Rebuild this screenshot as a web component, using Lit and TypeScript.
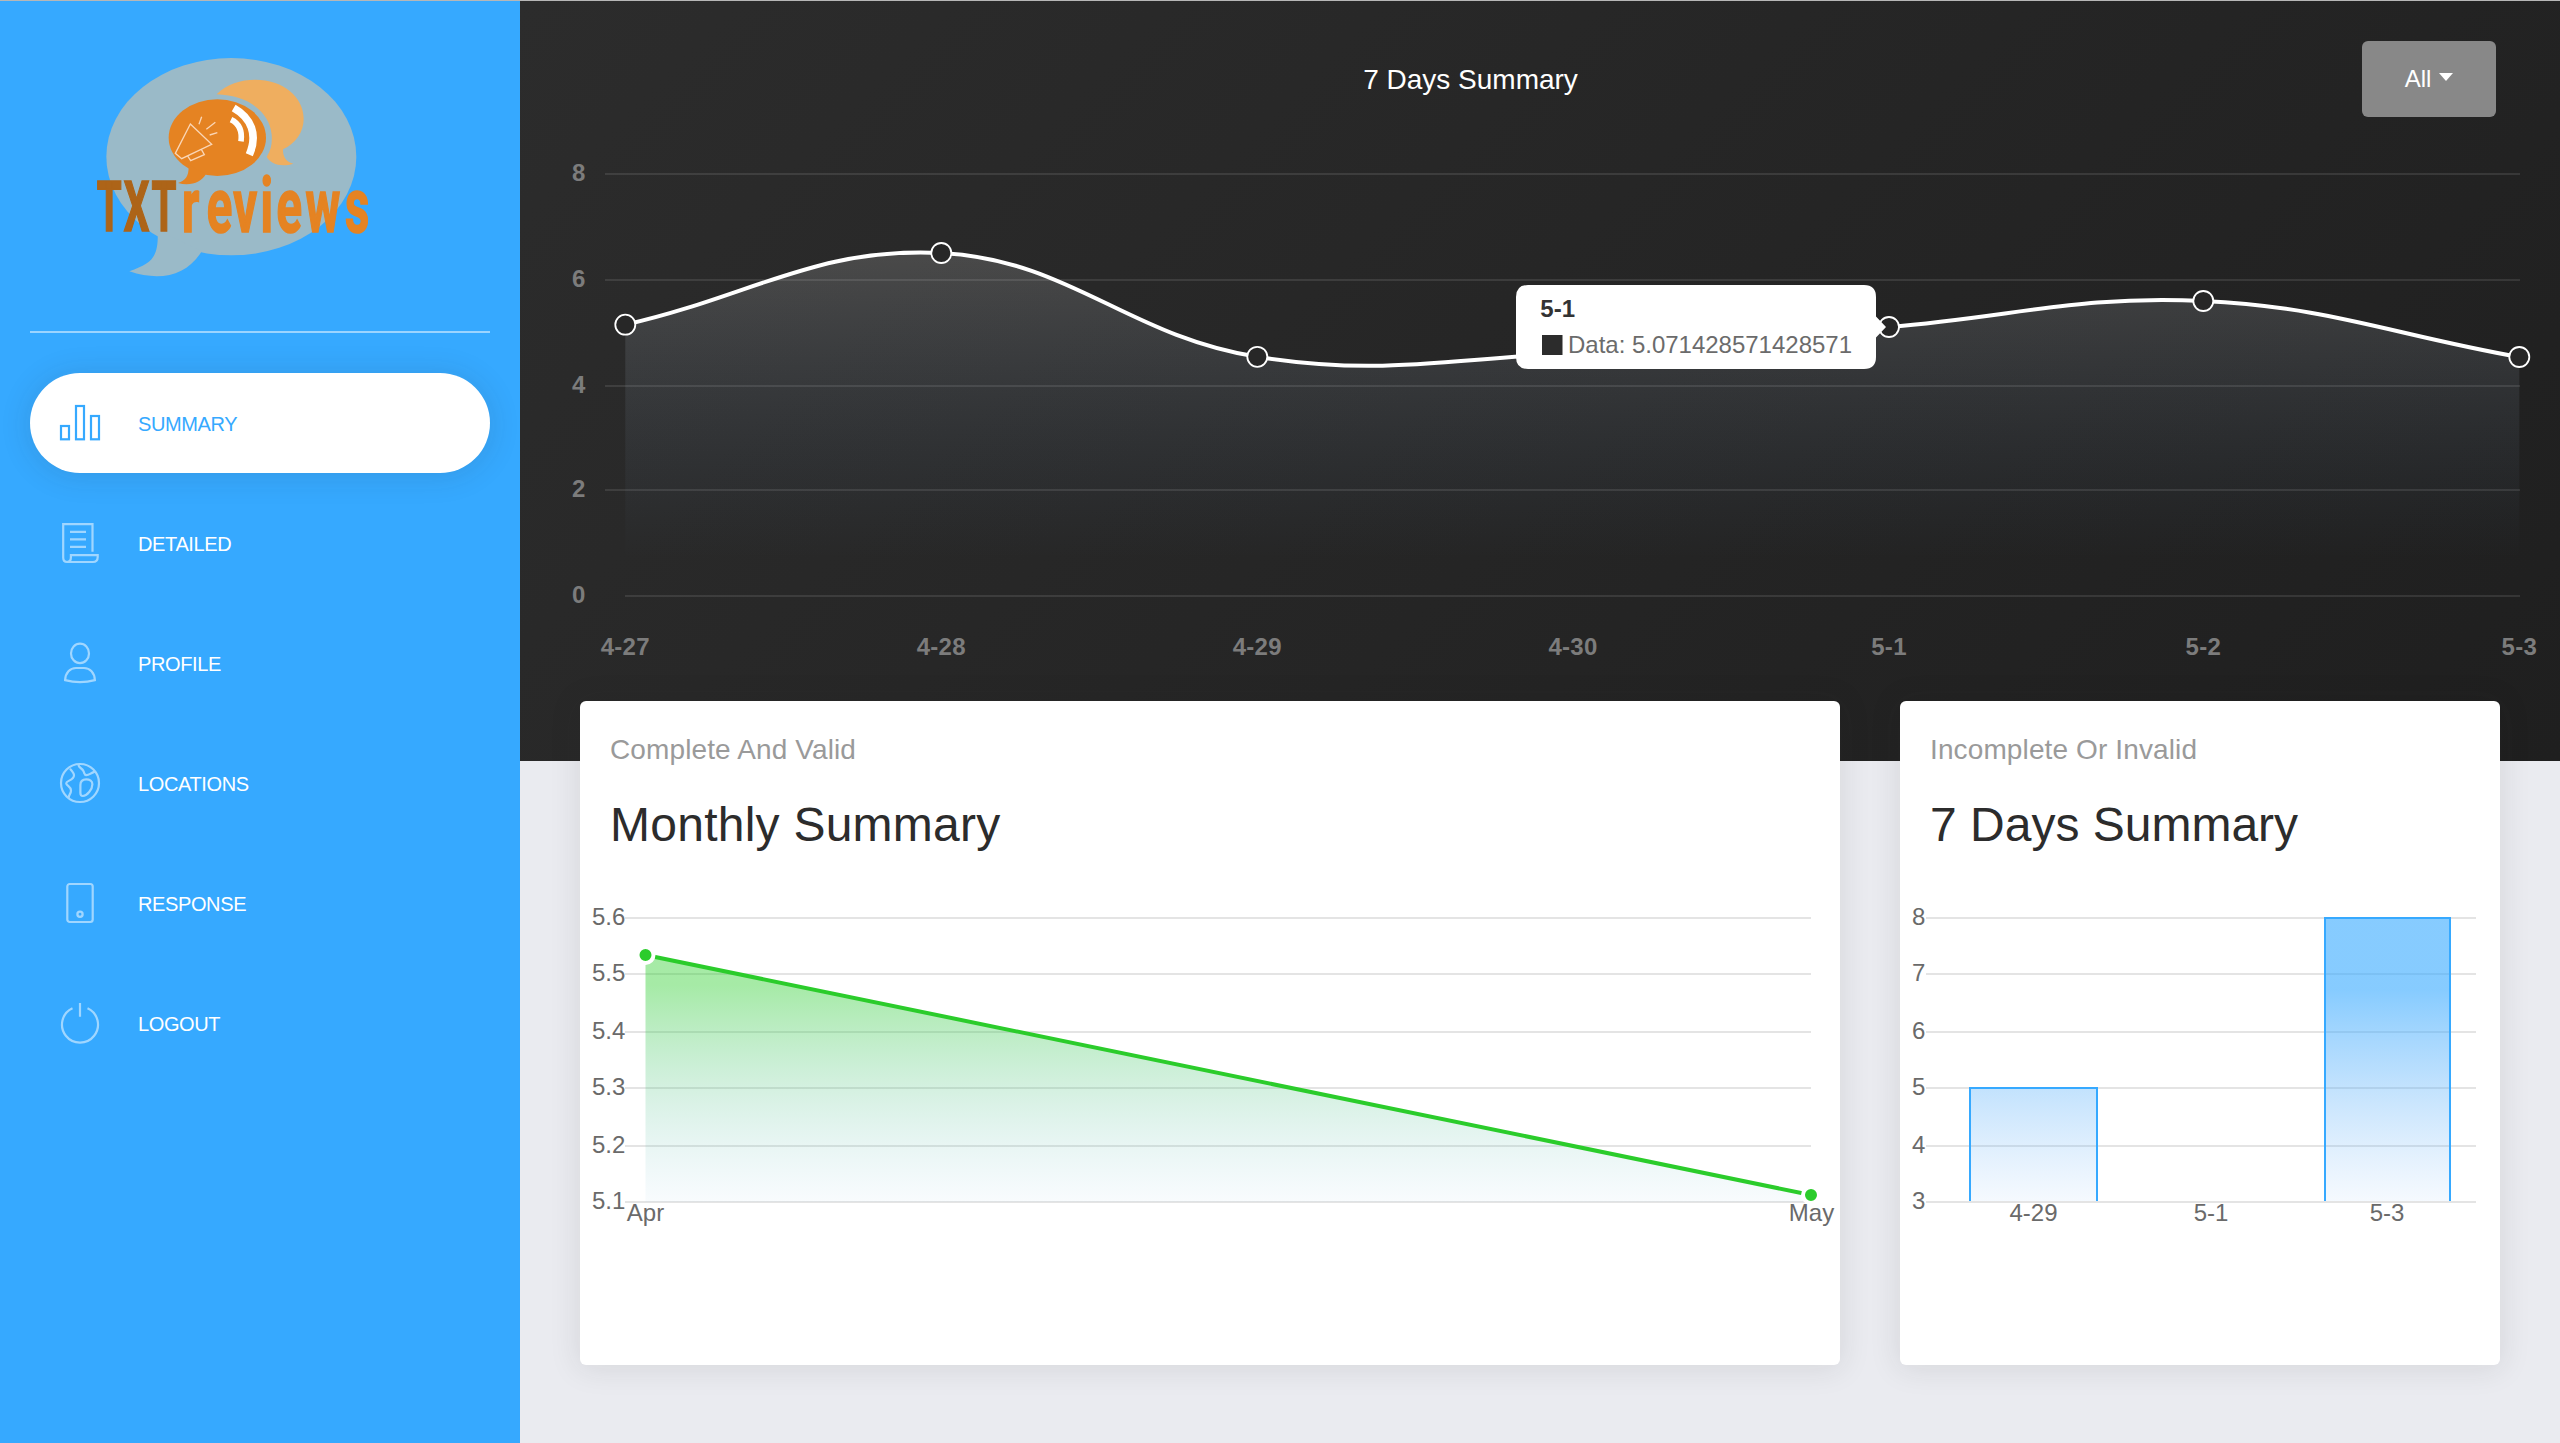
import { LitElement, html, svg, css, type TemplateResult } from "lit";
import { customElement, property } from "lit/decorators.js";
import { classMap } from "lit/directives/class-map.js";

type Point = { x: number; y: number };

/* Smooth path through the points, with control points taken from the neighbours. */
function splinePath(pts: Point[], tension = 0.4): string {
  const ctrl = pts.map((p, i) => {
    const a = pts[i - 1] ?? p;
    const b = pts[i + 1] ?? p;
    const d01 = Math.hypot(p.x - a.x, p.y - a.y);
    const d12 = Math.hypot(b.x - p.x, b.y - p.y);
    const fa = (tension * d01) / (d01 + d12);
    const fb = (tension * d12) / (d01 + d12);
    return {
      px: p.x - fa * (b.x - a.x),
      py: p.y - fa * (b.y - a.y),
      nx: p.x + fb * (b.x - a.x),
      ny: p.y + fb * (b.y - a.y),
    };
  });
  let d = `M${pts[0].x} ${pts[0].y}`;
  for (let i = 1; i < pts.length; i++) {
    d += `C${ctrl[i - 1].nx} ${ctrl[i - 1].ny} ${ctrl[i].px} ${ctrl[i].py} ${pts[i].x} ${pts[i].y}`;
  }
  return d;
}

const ICONS: Record<string, TemplateResult> = {
  bars: svg`<rect x="1" y="23" width="8" height="13.3"/><rect x="16" y="3" width="8" height="33.3"/><rect x="31" y="13" width="8" height="23.3"/>`,
  paper: svg`<path d="M32.5 28.7V1.1H3.2V34.6C3.2 37.4 4.6 39 7 39S10.9 37.4 10.9 34.6V32.2H37.7V34C37.7 37 35.8 39 32.8 39H7"/><path d="M10 8.8H26M10 16.3H26M10 23.8H26"/>`,
  user: svg`<ellipse cx="20" cy="10.4" rx="9" ry="9.7"/><path d="M5.1 37.1C5.5 29.6 10 25 16 25H24C30 25 34.5 29.6 34.9 37.1C26 39.5 14 39.5 5.1 37.1Z"/>`,
  globe: svg`<circle cx="20" cy="20" r="19"/><path d="M10 5.7C12.4 8.2 14 9.8 14 12.2C14 17.6 6.2 17.4 6.2 20.2C6.2 22.6 11 23.6 11 27.4C11 31 8.8 31.2 8.6 35"/><path d="M18.4 1.6C18.4 5 22 4.6 23.6 8.4C24.8 11.4 24.6 12.2 26.4 12.2C29.4 12.2 29.8 10.4 34.8 8.6"/><path d="M20.4 22C20.4 18 22.6 16.4 26.2 16.4C29.8 16.4 32.4 18.2 32.4 21.2C32.4 26.4 27 33 22.8 33C21 33 20.4 31.8 20.4 30Z"/>`,
  phone: svg`<rect x="7.3" y="1" width="25.4" height="38" rx="2.5"/><circle cx="20" cy="31.3" r="2.6" stroke-width="2.3"/>`,
  power: svg`<path d="M12.5 5.2A18 18 0 1 0 27.5 5.2M20 0V13.8"/>`,
};

@customElement("side-logo")
class SideLogo extends LitElement {
  static styles = css`
    :host { display: block; }
    svg { display: block; }
    .word { font-family: Roboto, "Liberation Sans", Arial, sans-serif; font-weight: 700; }
  `;
  render() {
    return html`<svg width="340" height="270" viewBox="0 0 1020 810">
      <g fill="#9abac8">
        <ellipse cx="514" cy="380" rx="375" ry="296" />
        <path d="M293 600C296 680 280 698 208 724C300 755 380 738 425 664Z" />
      </g>
      <path fill="#efae5f" d="M470 193C500 162 542 149 586 149C668 149 731 200 731 266C731 308 706 340 669 358C668 382 680 396 700 401C662 412 632 402 620 380C633 360 637 340 635 314C629 248 568 196 470 193Z" />
      <g fill="#e58322">
        <ellipse cx="472" cy="323" rx="146" ry="115" />
        <path d="M386 405C387 440 376 452 354 459C392 470 424 456 438 432Z" />
      </g>
      <g fill="none" stroke="#fff">
        <path stroke-width="23" d="M521 234C574 264 594 314 568 374" />
        <path stroke-width="17" d="M513 269C538 281 547 304 543 334" />
      </g>
      <path fill="none" stroke="#fad6b6" stroke-width="4" d="M391 282L455 343L365 386L346 370ZM383 378L392 392L433 374L424 358M417 283L425 260M439 298L466 277M449 315L472 308" />
      <text class="word" transform="translate(0 604) scale(.57 1)" x="193 336 481" y="0" font-size="212" fill="#ad6418" stroke="#ad6418" stroke-width="5">TXT</text>
      <text class="word" transform="translate(0 606) scale(.62 1)" x="590 710 838 970 1048 1188 1379" y="0" font-size="229" fill="#e58322" stroke="#e58322" stroke-width="5">reviews</text>
    </svg>`;
  }
}

@customElement("nav-item")
class NavItem extends LitElement {
  @property() icon = "";
  @property() label = "";
  @property({ type: Boolean }) active = false;

  static styles = css`
    :host { display: block; }
    .item {
      display: flex; align-items: center; height: 100px; box-sizing: border-box;
      padding-left: 30px; gap: 38px; border-radius: 50px; color: #fff;
      font-size: 20px; letter-spacing: -0.38px; line-height: 28px;
    }
    .item.active {
      background: #fff; color: #36a9ff;
      box-shadow: 0 2px 30px 2px rgba(39, 39, 39, 0.12);
    }
    svg { width: 40px; height: 40px; fill: none; stroke: currentColor; stroke-width: 2.2; opacity: 0.53; overflow: visible; }
    .active svg { opacity: 1; }
    .label { padding-top: 2px; }
  `;
  render() {
    return html`<div class=${classMap({ item: true, active: this.active })}>
      <svg viewBox="0 0 40 40">${ICONS[this.icon]}</svg>
      <span class="label">${this.label}</span>
    </div>`;
  }
}

@customElement("summary-chart")
class SummaryChart extends LitElement {
  private points: Point[] = [
    { x: 625.3, y: 324.7 }, { x: 941.3, y: 253 }, { x: 1257.3, y: 356.8 }, { x: 1573, y: 353 },
    { x: 1889, y: 327 }, { x: 2203.3, y: 301 }, { x: 2519.3, y: 357 },
  ];
  private days = ["4-27", "4-28", "4-29", "4-30", "5-1", "5-2", "5-3"];
  private ticks = [
    { v: 8, y: 174 }, { v: 6, y: 280 }, { v: 4, y: 386 }, { v: 2, y: 490 }, { v: 0, y: 596 },
  ];
  static styles = css`
    :host { display: block; }
    svg { display: block; font-family: "Liberation Sans", Arial, sans-serif; font-size: 24px; }
    .axis { fill: #7c7c7c; font-weight: 700; }
    .day { letter-spacing: 0.3px; }
    .tip-title { fill: #333; font-weight: 700; }
    .tip-text { fill: #6b6b6b; }
  `;
  render() {
    const d = splinePath(this.points);
    return html`<svg width="2040" height="635" viewBox="520 126 2040 635">
      <defs>
        <linearGradient id="fade" gradientUnits="userSpaceOnUse" x1="0" y1="560" x2="0" y2="258">
          <stop offset="0" stop-color="rgb(128,182,244)" stop-opacity="0" />
          <stop offset="1" stop-color="#fff" stop-opacity=".15" />
        </linearGradient>
      </defs>
      ${this.ticks.map((t) => svg`
        <rect x=${t.v ? 605 : 625} y=${t.y - 1} width=${t.v ? 1915 : 1895} height="2" fill="#fff" fill-opacity=".1"/>
        <text class="axis" x="585.4" y=${t.y + 7} text-anchor="end">${t.v}</text>`)}
      ${this.days.map((l, i) => svg`<text class="axis day" x=${this.points[i].x} y="655" text-anchor="middle">${l}</text>`)}
      <path d=${`${d}V596H625.3Z`} fill="url(#fade)" />
      <path d=${d} fill="none" stroke="#fff" stroke-width="4" />
      ${this.points.map((p) => svg`<circle cx=${p.x} cy=${p.y} r="10" fill="#272727" stroke="#fff" stroke-width="1.8"/>`)}
      <path fill="#fff" d="M1528 285H1864Q1876 285 1876 297V316.500L1886 327L1876 337.500V357Q1876 369 1864 369H1528Q1516 369 1516 357V297Q1516 285 1528 285Z" />
      <text class="tip-title" x="1540.300" y="317">5-1</text>
      <rect x="1542" y="335" width="20.500" height="20" fill="#2c2c2c" />
      <text class="tip-text" x="1568" y="353" textLength="284">Data: 5.071428571428571</text>
    </svg>`;
  }
}

const LIGHT_LINES = [918, 974, 1032, 1088, 1146, 1202];
const lightChartStyles = css`
  :host { display: block; }
  svg { display: block; font-family: "Liberation Sans", Arial, sans-serif; font-size: 24px; }
  .axis { fill: #6a6a6a; }
`;

@customElement("monthly-chart")
class MonthlyChart extends LitElement {
  private ticks = ["5.6", "5.5", "5.4", "5.3", "5.2", "5.1"];
  static styles = lightChartStyles;
  render() {
    return html`<svg width="1260" height="476" viewBox="580 889 1260 476">
      <defs>
        <linearGradient id="fade" gradientUnits="userSpaceOnUse" x1="0" y1="1230" x2="0" y2="985">
          <stop offset="0" stop-color="rgb(128,182,244)" stop-opacity="0" />
          <stop offset="1" stop-color="#2bce2b" stop-opacity=".42" />
        </linearGradient>
      </defs>
      ${this.ticks.map((t, i) => svg`
        <rect x="625" y=${LIGHT_LINES[i] - 1} width="1186" height="2" fill="#e4e4e4"/>
        <text class="axis" x="625.3" y=${LIGHT_LINES[i] + 7} text-anchor="end">${t}</text>`)}
      <path d="M645.500 955L1811 1195V1202H645.500Z" fill="url(#fade)" />
      <path d="M645.500 955L1811 1195" stroke="#2bcc2b" stroke-width="4" />
      <g fill="#2bcc2b" stroke="#fff" stroke-width="4">
        <circle cx="645.500" cy="955" r="8" /><circle cx="1811" cy="1195" r="8" />
      </g>
      <text class="axis" x="645.500" y="1221" text-anchor="middle">Apr</text>
      <text class="axis" x="1811.500" y="1221" text-anchor="middle">May</text>
    </svg>`;
  }
}

@customElement("invalid-chart")
class InvalidChart extends LitElement {
  private ticks = [8, 7, 6, 5, 4, 3];
  private bars = [
    { x: 1969.5, y: 1088, w: 128 },
    { x: 2324.5, y: 918, w: 126 },
  ];
  private days = [
    { l: "4-29", x: 2033.5 }, { l: "5-1", x: 2211 }, { l: "5-3", x: 2387 },
  ];
  static styles = lightChartStyles;
  render() {
    return html`<svg width="600" height="476" viewBox="1900 889 600 476">
      <defs>
        <linearGradient id="fade" gradientUnits="userSpaceOnUse" x1="0" y1="1230" x2="0" y2="990">
          <stop offset="0" stop-color="rgb(128,182,244)" stop-opacity="0" />
          <stop offset="1" stop-color="#36a9ff" stop-opacity=".6" />
        </linearGradient>
      </defs>
      ${this.ticks.map((t, i) => svg`
        <rect x="1926" y=${LIGHT_LINES[i] - 1} width="550" height="2" fill="#e4e4e4"/>
        <text class="axis" x="1925.3" y=${LIGHT_LINES[i] + 7} text-anchor="end">${t}</text>`)}
      ${this.bars.map((b) => svg`
        <rect x=${b.x} y=${b.y} width=${b.w} height=${1201 - b.y} fill="url(#fade)"/>
        <path d="M${b.x + 0.5} 1201V${b.y}H${b.x + b.w - 0.5}V1201" fill="none" stroke="#36a9ff" stroke-width="2"/>`)}
      ${this.days.map((t) => svg`<text class="axis" x=${t.x} y="1221" text-anchor="middle">${t.l}</text>`)}
    </svg>`;
  }
}

@customElement("app-root")
class AppRoot extends LitElement {
  private items = [
    ["bars", "SUMMARY"], ["paper", "DETAILED"], ["user", "PROFILE"],
    ["globe", "LOCATIONS"], ["phone", "RESPONSE"], ["power", "LOGOUT"],
  ];
  static styles = css`
    :host {
      display: flex; box-sizing: border-box; width: 2560px; height: 1443px; overflow: hidden;
      border-top: 1px solid #b7b7b7; background: #eaebf0;
      font-family: "Liberation Sans", Arial, sans-serif;
    }
    .side { width: 520px; flex: none; box-sizing: border-box; background: #36a9ff; padding: 29px 30px 0; }
    .brand { padding: 0 0 31px 30px; border-bottom: 2px solid rgba(255, 255, 255, 0.5); }
    .nav { display: flex; flex-direction: column; gap: 20px; padding-top: 40px; }
    .main { flex: 1; min-width: 0; display: flex; flex-direction: column; }
    .hero { height: 760px; flex: none; background: linear-gradient(135deg, #2c2c2c, #1f1f1f); }
    .bar {
      height: 125px; box-sizing: border-box; padding: 40px 64px 0 0;
      display: grid; grid-template-columns: 1fr 134px; align-items: start;
    }
    .title { color: #fff; font-size: 28px; line-height: 78px; text-align: center; padding-left: 59px; }
    .drop {
      height: 76px; border-radius: 6px; background: #888; color: #fff; font-size: 24px;
      display: flex; align-items: center; justify-content: center; gap: 8px;
    }
    .caret { border: 7px solid transparent; border-top: 8px solid #fff; border-bottom: 0; margin-bottom: 4px; }
    .cards { display: flex; gap: 60px; margin-top: -60px; padding-left: 60px; }
    .card {
      height: 664px; box-sizing: border-box; background: #fff; border-radius: 6px;
      box-shadow: 0 2px 30px 2px rgba(39, 39, 39, 0.1);
    }
    .wide { width: 1260px; }
    .slim { width: 600px; }
    .head { height: 188px; box-sizing: border-box; padding: 31px 30px 0; }
    .category { font-size: 28px; line-height: 36px; color: #9a9a9a; letter-spacing: 0.12px; }
    .heading { margin: 29px 0 0; font-weight: 400; font-size: 48px; line-height: 56px; color: #2c2c2c; }
    .wide .heading { letter-spacing: 0.25px; }
  `;
  render() {
    return html`
      <aside class="side">
        <div class="brand"><side-logo></side-logo></div>
        <nav class="nav">
          ${this.items.map(([icon, label], i) => html`<nav-item .icon=${icon} .label=${label} ?active=${i === 0}></nav-item>`)}
        </nav>
      </aside>
      <main class="main">
        <section class="hero">
          <div class="bar">
            <div class="title">7 Days Summary</div>
            <div class="drop"><span>All</span><span class="caret"></span></div>
          </div>
          <summary-chart></summary-chart>
        </section>
        <section class="cards">
          <article class="card wide">
            <div class="head">
              <div class="category">Complete And Valid</div>
              <h2 class="heading">Monthly Summary</h2>
            </div>
            <monthly-chart></monthly-chart>
          </article>
          <article class="card slim">
            <div class="head">
              <div class="category">Incomplete Or Invalid</div>
              <h2 class="heading">7 Days Summary</h2>
            </div>
            <invalid-chart></invalid-chart>
          </article>
        </section>
      </main>`;
  }
}
